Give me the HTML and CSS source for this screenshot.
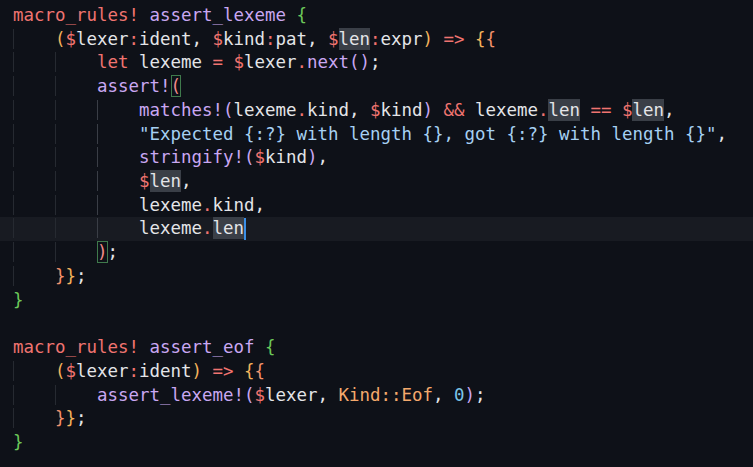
FILE: index.html
```html
<!DOCTYPE html>
<html>
<head>
<meta charset="utf-8">
<link rel="stylesheet" href="styles.css">
</head>
<body>
<div class="editor">
<div class="ln"><span class="kw">macro_rules!</span> <span class="fn">assert_lexeme</span> <span class="b1">{</span></div>
<div class="ln"><span class="ind">    </span><span class="b2">(</span><span class="op">$</span>lexer<span class="op">:</span>ident, <span class="op">$</span>kind<span class="op">:</span>pat, <span class="op">$</span><span class="hl">len</span><span class="op">:</span>expr<span class="b2">)</span> <span class="op">=&gt;</span> <span class="b2">{</span><span class="b3">{</span></div>
<div class="ln"><span class="ind">    </span><span class="ind">    </span><span class="kw">let</span> lexeme <span class="op">=</span> <span class="op">$</span>lexer<span class="op">.</span><span class="fn">next()</span>;</div>
<div class="ln"><span class="ind">    </span><span class="ind">    </span><span class="fn">assert!</span><span class="b4 match">(</span></div>
<div class="ln"><span class="ind">    </span><span class="ind">    </span><span class="ind act">    </span><span class="fn">matches!(</span>lexeme<span class="op">.</span>kind, <span class="op">$</span>kind<span class="fn">)</span> <span class="op">&amp;&amp;</span> lexeme<span class="op">.</span><span class="hl">len</span> <span class="op">==</span> <span class="op">$</span><span class="hl">len</span>,</div>
<div class="ln"><span class="ind">    </span><span class="ind">    </span><span class="ind act">    </span><span class="str">"Expected {:?} with length {}, got {:?} with length {}"</span>,</div>
<div class="ln"><span class="ind">    </span><span class="ind">    </span><span class="ind act">    </span><span class="fn">stringify!(</span><span class="op">$</span>kind<span class="fn">)</span>,</div>
<div class="ln"><span class="ind">    </span><span class="ind">    </span><span class="ind act">    </span><span class="op">$</span><span class="hl">len</span>,</div>
<div class="ln"><span class="ind">    </span><span class="ind">    </span><span class="ind act">    </span>lexeme<span class="op">.</span>kind,</div>
<div class="ln cur"><span class="ind">    </span><span class="ind">    </span><span class="ind act">    </span>lexeme<span class="op">.</span><span class="hl">len</span><span class="caret"></span></div>
<div class="ln"><span class="ind">    </span><span class="ind">    </span><span class="b4 match">)</span>;</div>
<div class="ln"><span class="ind">    </span><span class="b3">}</span><span class="b2">}</span>;</div>
<div class="ln"><span class="b1">}</span></div>
<div class="ln"> </div>
<div class="ln"><span class="kw">macro_rules!</span> <span class="fn">assert_eof</span> <span class="b1">{</span></div>
<div class="ln"><span class="ind">    </span><span class="b2">(</span><span class="op">$</span>lexer<span class="op">:</span>ident<span class="b2">)</span> <span class="op">=&gt;</span> <span class="b2">{</span><span class="b3">{</span></div>
<div class="ln"><span class="ind">    </span><span class="ind">    </span><span class="fn">assert_lexeme!(</span><span class="op">$</span>lexer, <span class="ty">Kind::Eof</span>, <span class="num">0</span><span class="fn">)</span>;</div>
<div class="ln"><span class="ind">    </span><span class="b3">}</span><span class="b2">}</span>;</div>
<div class="ln"><span class="b1">}</span></div>
</div>
</body>
</html>
```

FILE: styles.css
```css
html, body {
  margin: 0;
  padding: 0;
  background: #0e1118;
  height: 100%;
  overflow: hidden;
}
.editor {
  padding-top: 4px;
  font-family: "DejaVu Sans Mono", monospace;
  font-size: 17.46px;
  line-height: 23.72px;
  color: #e4e5e8;
}
.ln {
  height: 23.72px;
  padding-left: 13px;
  white-space: pre;
}
.cur {
  background: #181b22;
}
.ind {
  box-shadow: inset 1px 0 0 #262a31;
}
.ind.act {
  box-shadow: inset 1px 0 0 #3a3e46;
}
.kw { color: #f07470; }
.op { color: #f07470; }
.fn { color: #c9a7f2; }
.str { color: #a6d0f2; }
.ty { color: #f4a96c; }
.num { color: #7cc6e8; }
.b1 { color: #6cc85a; }
.b2 { color: #f2b35c; }
.b3 { color: #f2926c; }
.b4 { color: #f28b8b; }
.match {
  box-shadow: inset 0 0 0 1px #3f7a4c;
  display: inline-block;
  line-height: 22px;
}
.hl {
  display: inline-block;
  line-height: 22px;
  background: #3a3f47;
}
.caret {
  display: inline-block;
  width: 2px;
  height: 22px;
  margin-right: -2px;
  vertical-align: top;
  margin-top: 1px;
  background: #3b8fe6;
}
```
